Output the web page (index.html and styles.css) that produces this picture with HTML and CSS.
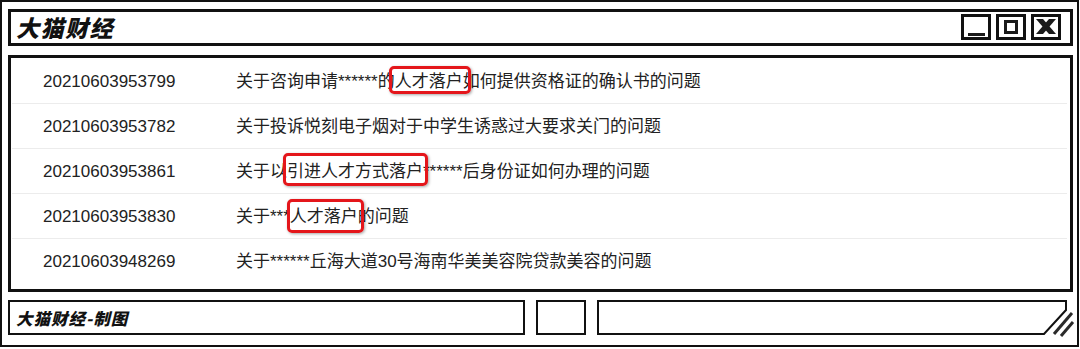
FILE: index.html
```html
<!DOCTYPE html>
<html lang="zh-CN">
<head>
<meta charset="utf-8">
<title>大猫财经</title>
<link rel="stylesheet" href="styles.css">
</head>
<body>
<div class="window">
  <header class="titlebar">
    <h1 class="title">大猫财经</h1>
    <div class="controls">
      <span class="btn btn-min"><span class="min-bar"></span></span>
      <span class="btn btn-max"><span class="max-box"></span></span>
      <span class="btn btn-close">
        <svg width="20" height="15" viewBox="0 0 20 15"><polygon points="0,0 7,0 20,15 13,15" fill="#1a1a1a"/><polygon points="13,0 20,0 7,15 0,15" fill="#1a1a1a"/></svg>
      </span>
    </div>
  </header>
  <main class="content">
    <div class="row"><span class="id">20210603953799</span><span class="subject">关于咨询申请******的<span class="mark mark-1">人才落户</span>如何提供资格证的确认书的问题</span></div>
    <div class="row"><span class="id">20210603953782</span><span class="subject">关于投诉悦刻电子烟对于中学生诱惑过大要求关门的问题</span></div>
    <div class="row"><span class="id">20210603953861</span><span class="subject">关于以<span class="mark mark-3">引进人才方式落户</span>******后身份证如何办理的问题</span></div>
    <div class="row"><span class="id">20210603953830</span><span class="subject">关于***<span class="mark mark-4">人才落户</span>的问题</span></div>
    <div class="row"><span class="id">20210603948269</span><span class="subject">关于******丘海大道30号海南华美美容院贷款美容的问题</span></div>
  </main>
  <footer class="statusbar">
    <div class="status status-main">大猫财经-制图</div>
    <div class="status status-small"></div>
    <div class="status-grip">
      <svg width="476" height="35" viewBox="0 0 476 35">
        <polygon points="1,1 469,1 469,10 447,34 1,34" fill="none" stroke="#111" stroke-width="2"/>
        <line x1="475" y1="13" x2="457" y2="34" stroke="#2a2a2a" stroke-width="3"/>
        <line x1="476" y1="22" x2="464" y2="36" stroke="#2a2a2a" stroke-width="3"/>
      </svg>
    </div>
  </footer>
</div>
</body>
</html>
```
FILE: styles.css
```css
* {
  box-sizing: border-box;
  margin: 0;
  padding: 0;
}

body {
  width: 1080px;
  height: 349px;
  background: #fff;
  overflow: hidden;
  font-family: "Liberation Sans", "Noto Sans CJK SC", sans-serif;
  color: #222;
}

.window {
  width: 1079px;
  height: 347px;
  border: 2px solid #111;
  padding: 7px 4px 10px 6px;
  display: flex;
  flex-direction: column;
}

.titlebar {
  height: 37px;
  flex: none;
  border: 3px solid #111;
  margin-bottom: 9px;
  padding: 0 9px 0 5px;
  display: flex;
  align-items: center;
  justify-content: space-between;
}

.title {
  font-family: "Noto Sans CJK SC", sans-serif;
  font-style: italic;
  font-weight: 900;
  font-size: 23px;
  letter-spacing: 1.5px;
  line-height: 1;
  color: #111;
}

.controls {
  display: flex;
  gap: 5px;
  margin-bottom: 2px;
}

.btn {
  width: 30px;
  height: 26px;
  border: 3px solid #111;
  display: flex;
  align-items: center;
  justify-content: center;
}

.btn-min {
  align-items: flex-end;
  padding-bottom: 1px;
}

.min-bar {
  width: 17px;
  height: 3px;
  background: #1a1a1a;
}

.max-box {
  width: 14px;
  height: 14px;
  border: 3px solid #1a1a1a;
}

.btn-close svg {
  display: block;
}

.content {
  height: 237px;
  flex: none;
  border: 3px solid #111;
  margin-bottom: 8px;
  padding: 1px 3px 0 1px;
}

.row {
  height: 45px;
  display: flex;
  border-bottom: 1px solid #ececec;
  font-size: 17px;
  line-height: 45px;
  white-space: nowrap;
}

.row:last-child {
  border-bottom: none;
}

.id {
  width: 224px;
  flex: none;
  padding-left: 31px;
}

.subject {
  flex: 1;
}

.mark {
  position: relative;
}

.mark::after {
  content: "";
  position: absolute;
  border: 3px solid #e4161b;
  border-radius: 5px;
  box-shadow: 1px 1px 3px rgba(0, 0, 0, 0.35);
}

.mark-1::after {
  left: -6px;
  right: -8px;
  top: -6px;
  bottom: -3px;
}

.mark-3::after {
  left: -4px;
  right: -5px;
  top: -9px;
  bottom: -5px;
}

.mark-4::after {
  left: -3px;
  right: -6px;
  top: -8px;
  bottom: -7px;
}

.statusbar {
  height: 35px;
  flex: none;
  display: flex;
  gap: 11px;
}

.status {
  border: 2px solid #111;
}

.status-main {
  width: 517px;
  display: flex;
  align-items: center;
  padding-left: 6px;
  font-family: "Noto Sans CJK SC", sans-serif;
  font-style: italic;
  font-weight: 900;
  font-size: 16.5px;
  letter-spacing: 1px;
  color: #111;
}

.status-small {
  width: 50px;
}

.status-grip {
  width: 476px;
  height: 35px;
}

.status-grip svg {
  display: block;
  overflow: visible;
}
```
